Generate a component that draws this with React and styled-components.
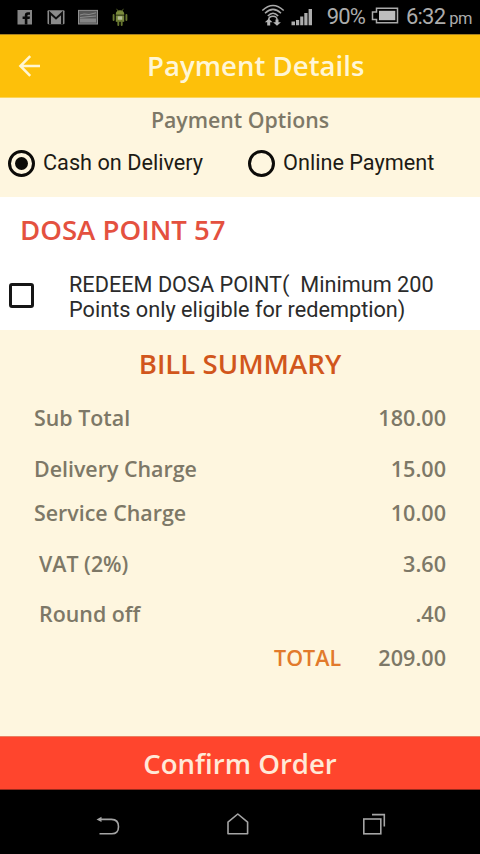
import React from "react";
import styled, { createGlobalStyle } from "styled-components";

const Global = createGlobalStyle`
  * { box-sizing: border-box; }
  body { margin: 0; background: #000; }
`;

const Screen = styled.div`
  width: 480px;
  height: 854px;
  display: flex;
  flex-direction: column;
  background: #fef6df;
  font-family: "Open Sans", sans-serif;
  overflow: hidden;
`;

const Label = styled.span`
  display: block;
  white-space: pre;
  font-family: ${(p) => (p.$roboto ? "Roboto" : '"Open Sans"')}, sans-serif;
  font-size: ${(p) => p.$size}px;
  font-weight: ${(p) => p.$weight || (p.$roboto ? 400 : 600)};
  color: ${(p) => p.$color};
  letter-spacing: ${(p) => p.$track || 0}px;
  line-height: ${(p) => p.$line || 30}px;
`;

const StatusBar = styled.header`
  height: 34px;
  flex: none;
  background: #000;
  display: flex;
  justify-content: space-between;
  padding: 0 8px 0 16px;
`;

const Notifications = styled.div`
  display: flex;
  padding-top: 8px;
  height: 26px;
`;

const SystemInfo = styled.div`
  display: flex;
  align-items: flex-start;
`;

const Glyph = styled.svg`
  display: block;
  flex: none;
  margin-left: ${(p) => p.$left || 0}px;
  margin-top: ${(p) => p.$top || 0}px;
`;

const StatusText = styled(Label)`
  margin-left: ${(p) => p.$left}px;
  margin-top: 2px;
`;

const AppBar = styled.div`
  height: 64px;
  flex: none;
  background: #fdc00a;
  border-top: 1px solid #a88120;
  border-bottom: 1px solid #fbd55b;
  display: flex;
  align-items: center;
  padding-left: 18px;
`;

const BackButton = styled.button`
  border: 0;
  padding: 0;
  background: none;
  width: 129px;
`;

const Title = styled(Label)`
  margin-bottom: 2px;
`;

const Options = styled.section`
  height: 99px;
  flex: none;
  display: flex;
  flex-direction: column;
  padding-top: 7px;
`;

const Centered = styled.div`
  display: flex;
  justify-content: center;
`;

const Choices = styled.div`
  display: grid;
  grid-template-columns: 240px 240px;
  margin-top: 13px;
`;

const Choice = styled.label`
  display: flex;
  align-items: center;
  gap: 8px;
  padding-left: 8px;
`;

const Radio = styled.span`
  width: 27px;
  height: 27px;
  border: 3px solid #0c0b08;
  border-radius: 50%;
  display: flex;
  align-items: center;
  justify-content: center;

  &::after {
    content: "";
    width: 13px;
    height: 13px;
    border-radius: 50%;
    background: ${(p) => (p.$on ? "#0c0b08" : "transparent")};
  }
`;

const Points = styled.section`
  height: 133px;
  flex: none;
  background: #fff;
  padding: 17px 0 0 20px;
`;

const Redeem = styled.label`
  display: flex;
  align-items: flex-start;
  margin: 28px 0 0 -11px;
`;

const Checkbox = styled.span`
  flex: none;
  width: 25px;
  height: 25px;
  border: 3px solid #161616;
  border-radius: 3px;
  margin: 11px 35px 0 0;
`;

const Bill = styled.section`
  height: 406px;
  flex: none;
  padding: 18px 34px 0;
`;

const Row = styled.div`
  display: flex;
  justify-content: space-between;
  height: 30px;
  margin-top: ${(p) => p.$gap}px;
  padding-left: ${(p) => p.$indent || 0}px;
`;

const Confirm = styled.button`
  height: 54px;
  flex: none;
  border: 0;
  border-top: 1px solid #e98062;
  border-bottom: 1px solid #9a2a1c;
  background: #ff452d;
  display: flex;
  align-items: center;
  justify-content: center;
  padding: 0;
`;

const NavBar = styled.nav`
  flex: 1;
  background: #000;
  display: flex;
  padding: 20px 0 0 95px;
`;

const GREY = "#7d7867";

const rows = [
  ["Sub Total", "180.00", 25, 0],
  ["Delivery Charge", "15.00", 21, 0],
  ["Service Charge", "10.00", 14, 0],
  ["VAT (2%)", "3.60", 20.5, 5],
  ["Round off", ".40", 20.5, 5],
];

export default function App() {
  return (
    <Screen>
      <Global />
      <StatusBar>
        <Notifications>
          <Glyph width="17" height="18" viewBox="0 0 17 18" $left={1} $top={1}>
            <rect x="0.5" y="1" width="14.5" height="14.5" fill="#858585" />
            <path d="M7.8 15.5V10H5.6V7.6H7.8V6.2Q7.8 3.2 10.9 3.2H13V5.8H11.6Q10.4 5.8 10.4 6.8V7.6H13L12.6 10H10.4V15.5Z" fill="#080808" />
          </Glyph>
          <Glyph width="19" height="18" viewBox="0 0 19 18" $left={13} $top={1}>
            <rect x="0.5" y="1.3" width="17" height="14" rx="1" fill="#8b8b8b" />
            <path d="M3 15V4L9 9.5L15 4V15" fill="none" stroke="#101010" strokeWidth="2" />
          </Glyph>
          <Glyph width="22" height="18" viewBox="0 0 22 18" $left={12} $top={1}>
            <rect x="0.5" y="1.4" width="19" height="13.6" fill="#555" stroke="#909090" />
            <path d="M2 6L6 5L11 5.5L18 3.8M2 8.5L9 7.8L18 7" stroke="#999" strokeWidth="0.8" fill="none" />
            <rect x="2" y="9.5" width="16" height="4" fill="#858585" />
          </Glyph>
          <Glyph width="17" height="19" viewBox="0 0 17 19" $left={12}>
            <path d="M3.7 6.8Q3.7 2.3 8 2.3T12.3 6.8Z" fill="#7b8b3d" />
            <path d="M4.6 0.8L6.2 3.4M11.4 0.8L9.8 3.4" stroke="#66752f" strokeWidth="0.8" />
            <path d="M3.8 7.4H12.2V13.8H3.8Z" fill="#75853b" />
            <path d="M1.6 7V12M14.4 7V12M6.3 13V17M9.7 13V17" stroke="#66752f" strokeWidth="1.9" strokeLinecap="round" />
            <rect x="5.8" y="8.3" width="4.4" height="3.4" fill="#b5bc96" />
          </Glyph>
        </Notifications>
        <SystemInfo>
          <Glyph width="24" height="24" viewBox="0 0 24 24" $top={4}>
            <g fill="none" stroke="#aaa" strokeWidth="1.5">
              <path d="M1.3 6.5Q12 -3.5 22.7 6.5" />
              <path d="M4 9.3Q12 1.5 20 9.3" />
              <path d="M6.8 12Q12 6.5 17.2 12" />
              <path d="M7.7 21V16Q7.7 12.3 12 12.3T16 16V21" />
            </g>
            <path d="M3.8 18.2L7.7 14.8L11.6 18.2H9.2V21.5H6.2V18.2ZM12.1 18.2H14.5V15.5H17.5V18.2H19.9L16 21.8Z" fill="#b5b5b5" />
          </Glyph>
          <Glyph width="23" height="18" viewBox="0 0 23 18" $left={6} $top={8}>
            <path d="M0.5 13.5H4V17.2H0.5ZM5 12H8.2V17.2H5ZM9.2 8.5H12.3V17.2H9.2ZM13.3 5H16.5V17.2H13.3ZM17.6 1H21V17.2H17.6Z" fill="#adadad" />
          </Glyph>
          <StatusText $roboto $size={22} $color="#acacac" $left={13} $track={-0.9}>90%</StatusText>
          <Glyph width="28" height="18" viewBox="0 0 28 18" $left={6} $top={7}>
            <path d="M5.5 1.2H26.5V15.8H5.5V12.5H1.5V5H5.5Z" fill="none" stroke="#aaa" strokeWidth="1.5" />
            <rect x="8" y="3.8" width="16.3" height="9.4" fill="#bdbdbd" />
          </Glyph>
          <StatusText $roboto $size={22} $color="#acacac" $left={7} $track={-0.8}>6:32</StatusText>
          <StatusText $roboto $size={16.5} $color="#acacac" $left={4} $line={34} $track={-0.5}>pm</StatusText>
        </SystemInfo>
      </StatusBar>

      <AppBar>
        <BackButton aria-label="Back">
          <Glyph width="24" height="24" viewBox="0 0 24 24">
            <path d="M22 12H3M12.2 2.2L2.4 12L12.2 21.8" fill="none" stroke="#fff6d2" strokeWidth="2.5" />
          </Glyph>
        </BackButton>
        <Title $size={27.6} $color="#fff6d6">Payment Details</Title>
      </AppBar>

      <Options>
        <Centered>
          <Label $size={21.3} $color={GREY}>Payment Options</Label>
        </Centered>
        <Choices>
          <Choice>
            <Radio $on />
            <Label $roboto $size={21.7} $color="#1d1b15">Cash on Delivery</Label>
          </Choice>
          <Choice>
            <Radio />
            <Label $roboto $size={21.7} $color="#1d1b15">Online Payment</Label>
          </Choice>
        </Choices>
      </Options>

      <Points>
        <Label $size={27.6} $color="#e4513f">DOSA POINT 57</Label>
        <Redeem>
          <Checkbox />
          <Label $roboto $size={21.7} $line={25} $color="#2b2b2b">
            {"REDEEM DOSA POINT(  Minimum 200\nPoints only eligible for redemption)"}
          </Label>
        </Redeem>
      </Points>

      <Bill>
        <Centered>
          <Label $size={27.6} $color="#d1561c">BILL SUMMARY</Label>
        </Centered>
        {rows.map(([name, value, gap, indent]) => (
          <Row key={name} $gap={gap} $indent={indent}>
            <Label $size={21.4} $color={GREY}>{name}</Label>
            <Label $size={21.6} $color={GREY}>{value}</Label>
          </Row>
        ))}
        <Row $gap={13.5} $indent={240}>
          <Label $size={21.5} $color="#e27a2c">TOTAL</Label>
          <Label $size={21.6} $color={GREY}>209.00</Label>
        </Row>
      </Bill>

      <Confirm>
        <Label $size={27.6} $color="#ffe9d8">Confirm Order</Label>
      </Confirm>

      <NavBar>
        <Glyph width="26" height="28" viewBox="0 0 26 28" $top={1}>
          <path d="M4 8.4H16.5Q23.5 8.4 23.5 15.7T16.5 22.8H4.5" fill="none" stroke="#a5a5a5" strokeWidth="1.6" />
          <path d="M1.5 8.4L6.5 5.8V11Z" fill="#a5a5a5" />
        </Glyph>
        <Glyph width="24" height="28" viewBox="0 0 24 28" $left={105} $top={1}>
          <path d="M2 22.8V11.2L11.8 3L21.6 11.2V22.8Z" fill="none" stroke="#a5a5a5" strokeWidth="1.6" strokeLinejoin="round" />
        </Glyph>
        <Glyph width="26" height="28" viewBox="0 0 26 28" $left={111} $top={1}>
          <rect x="2.8" y="8" width="17" height="14.8" fill="none" stroke="#a5a5a5" strokeWidth="1.6" />
          <path d="M11 3.6H23.3V15.5" fill="none" stroke="#a5a5a5" strokeWidth="1.6" />
        </Glyph>
      </NavBar>
    </Screen>
  );
}
